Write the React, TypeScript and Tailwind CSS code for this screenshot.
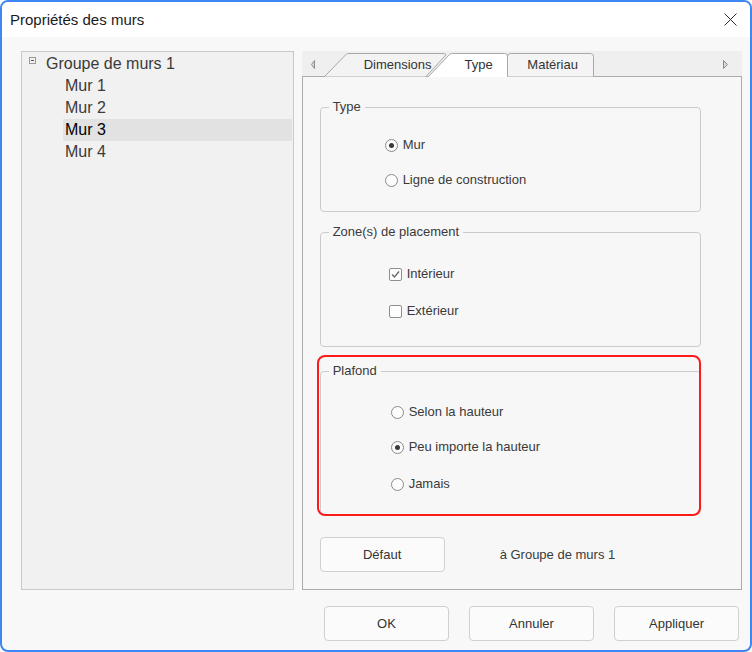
import React from "react";

const Radio = ({ checked }: { checked?: boolean }) => (
  <span className="w-[13px] h-[13px] rounded-full border border-[#8a8a8a] bg-[#fdfdfd] flex items-center justify-center shrink-0">
    {checked && <span className="w-[5px] h-[5px] rounded-full bg-[#3a3a3a]" />}
  </span>
);

const Check = ({ checked }: { checked?: boolean }) => (
  <span className="w-[13px] h-[13px] rounded-[2px] border border-[#8f8f8f] bg-[#fdfdfd] flex items-center justify-center shrink-0">
    {checked && (
      <svg width="11" height="11" viewBox="0 0 11 11">
        <polyline points="2,5.5 4.5,8 9,2.5" fill="none" stroke="#6a6a6a" strokeWidth="1.4" />
      </svg>
    )}
  </span>
);

const Button = ({ children }: { children: React.ReactNode }) => (
  <div className="w-[125px] h-[35px] rounded-[4px] border border-[#d0d0d0] bg-[#fbfbfb] flex items-center justify-center text-[13px] text-[#333]">
    {children}
  </div>
);

export default function App() {
  return (
    <div className="w-[752px] h-[652px] border-2 border-[#3d86f4] rounded-[8px] bg-[#f8f8f8] flex flex-col overflow-hidden font-['Liberation_Sans',Arial,sans-serif]">
      {/* Title bar */}
      <div className="h-[35px] bg-white flex items-center justify-between pl-[8px] pr-[13px] shrink-0">
        <span className="text-[15px] text-[#1a1a1a] leading-none">Propriétés des murs</span>
        <svg width="13" height="13" viewBox="0 0 13 13">
          <line x1="0.5" y1="0.5" x2="12.5" y2="12.5" stroke="#2a2a2a" strokeWidth="1" />
          <line x1="12.5" y1="0.5" x2="0.5" y2="12.5" stroke="#2a2a2a" strokeWidth="1" />
        </svg>
      </div>

      {/* Body */}
      <div className="flex-1 flex flex-col pt-[14px] pl-[19px] pr-[8px]">
        <div className="h-[539px] flex gap-[8px]">
          {/* Tree */}
          <div className="w-[273px] border border-[#c9c9c9] bg-[#f1f1f1] pt-[1px] text-[16px] text-[#3a3a3a]">
            <div className="h-[22px] flex items-start">
              <span className="ml-[7px] mt-[4px] w-[7px] h-[7px] border border-[#9a9a9a] flex items-center justify-center">
                <span className="w-[3px] h-[1px] bg-[#555]" />
              </span>
              <span className="ml-[10px] leading-[22px]">Groupe de murs 1</span>
            </div>
            {["Mur 1", "Mur 2", "Mur 3", "Mur 4"].map((m) => (
              <div
                key={m}
                className={
                  m === "Mur 3"
                    ? "ml-[41px] mr-[1px] h-[22px] pl-[2px] leading-[22px] bg-[#e2e2e2] text-black"
                    : "ml-[41px] mr-[1px] h-[22px] pl-[2px] leading-[22px]"
                }
              >
                {m}
              </div>
            ))}
          </div>

          {/* Right panel */}
          <div className="w-[441px] flex flex-col">
            <div className="h-[25px] bg-[#efefef] relative shrink-0">
              <svg className="absolute left-0 top-0 z-10" width="441" height="26" viewBox="0 0 441 26">
                <polygon points="9.5,13.5 12.5,9.5 12.5,17.5" fill="#d8d8d8" stroke="#8c8c8c" strokeWidth="1" />
                <polygon points="425.5,13.5 421.5,9.5 421.5,17.5" fill="#d8d8d8" stroke="#8c8c8c" strokeWidth="1" />
                <path d="M22.5,25.5 L44.5,3 Q45.5,2.5 47,2.5 L141,2.5 Q145,2.5 143,5 L124,25.5" fill="#f3f3f3" stroke="#a8a8a8" strokeWidth="1" />
                <path d="M205.5,25.5 L205.5,5.5 Q205.5,2.5 208.5,2.5 L288.5,2.5 Q291.5,2.5 291.5,5.5 L291.5,25.5" fill="#f4f4f4" stroke="#a8a8a8" strokeWidth="1" />
                <path d="M126.5,25.5 L147.5,3.5 Q148.5,2.5 150.5,2.5 L202.5,2.5 Q205.5,2.5 205.5,5.5 L205.5,25.5" fill="#ffffff" stroke="#a8a8a8" strokeWidth="1" />
                <rect x="127" y="25" width="78" height="1.5" fill="#ffffff" />
              </svg>
              <div className="absolute inset-0 z-20 flex items-center pt-[2px] pl-[36px] text-[13px] text-[#333]">
                <span className="w-[120px] text-center">Dimensions</span>
                <span className="w-[42px] text-center">Type</span>
                <span className="w-[106px] text-center">Matériau</span>
              </div>
            </div>

            <div className="flex-1 border border-[#ababab] bg-[#f7f7f7] pl-[17px] pt-[30px] text-[13px] text-[#3a3a3a]">
              {/* Type */}
              <div className="w-[381px] h-[105px] relative border border-[#cacaca] rounded-[4px]">
                <span className="absolute left-[8px] top-[-9px] px-[4px] bg-[#f7f7f7] leading-[16px]">Type</span>
                <div className="flex flex-col pl-[64px] pt-[27px] gap-[15px]">
                  <div className="h-[20px] flex items-center gap-[5px]">
                    <Radio checked />
                    <span>Mur</span>
                  </div>
                  <div className="h-[20px] flex items-center gap-[5px]">
                    <Radio />
                    <span>Ligne de construction</span>
                  </div>
                </div>
              </div>

              {/* Zone */}
              <div className="mt-[20px] w-[381px] h-[115px] relative border border-[#cacaca] rounded-[4px]">
                <span className="absolute left-[8px] top-[-9px] px-[4px] bg-[#f7f7f7] leading-[16px]">Zone(s) de placement</span>
                <div className="flex flex-col pl-[68px] pt-[31px] gap-[17px]">
                  <div className="h-[20px] flex items-center gap-[5px]">
                    <Check checked />
                    <span>Intérieur</span>
                  </div>
                  <div className="h-[20px] flex items-center gap-[5px]">
                    <Check />
                    <span>Extérieur</span>
                  </div>
                </div>
              </div>

              {/* Plafond */}
              <div className="mt-[24px] w-[381px] h-[144px] relative border border-[#cacaca] rounded-[4px]">
                <span className="absolute left-[8px] top-[-9px] px-[4px] bg-[#f7f7f7] leading-[16px]">Plafond</span>
                <div className="flex flex-col pl-[70px] pt-[30px]">
                  <div className="h-[20px] flex items-center gap-[5px]">
                    <Radio />
                    <span>Selon la hauteur</span>
                  </div>
                  <div className="mt-[15px] h-[20px] flex items-center gap-[5px]">
                    <Radio checked />
                    <span>Peu importe la hauteur</span>
                  </div>
                  <div className="mt-[17px] h-[20px] flex items-center gap-[5px]">
                    <Radio />
                    <span>Jamais</span>
                  </div>
                </div>
                <div className="absolute left-[-4px] top-[-17px] w-[384px] h-[161px] border-2 border-[#ff1a1a] rounded-[8px]" />
              </div>

              {/* Défaut */}
              <div className="mt-[22px] flex items-center">
                <Button>Défaut</Button>
                <span className="ml-[55px]">à Groupe de murs 1</span>
              </div>
            </div>
          </div>
        </div>

        {/* Bottom buttons */}
        <div className="mt-[16px] flex justify-end gap-[20px] pr-[3px]">
          <Button>OK</Button>
          <Button>Annuler</Button>
          <Button>Appliquer</Button>
        </div>
      </div>
    </div>
  );
}
